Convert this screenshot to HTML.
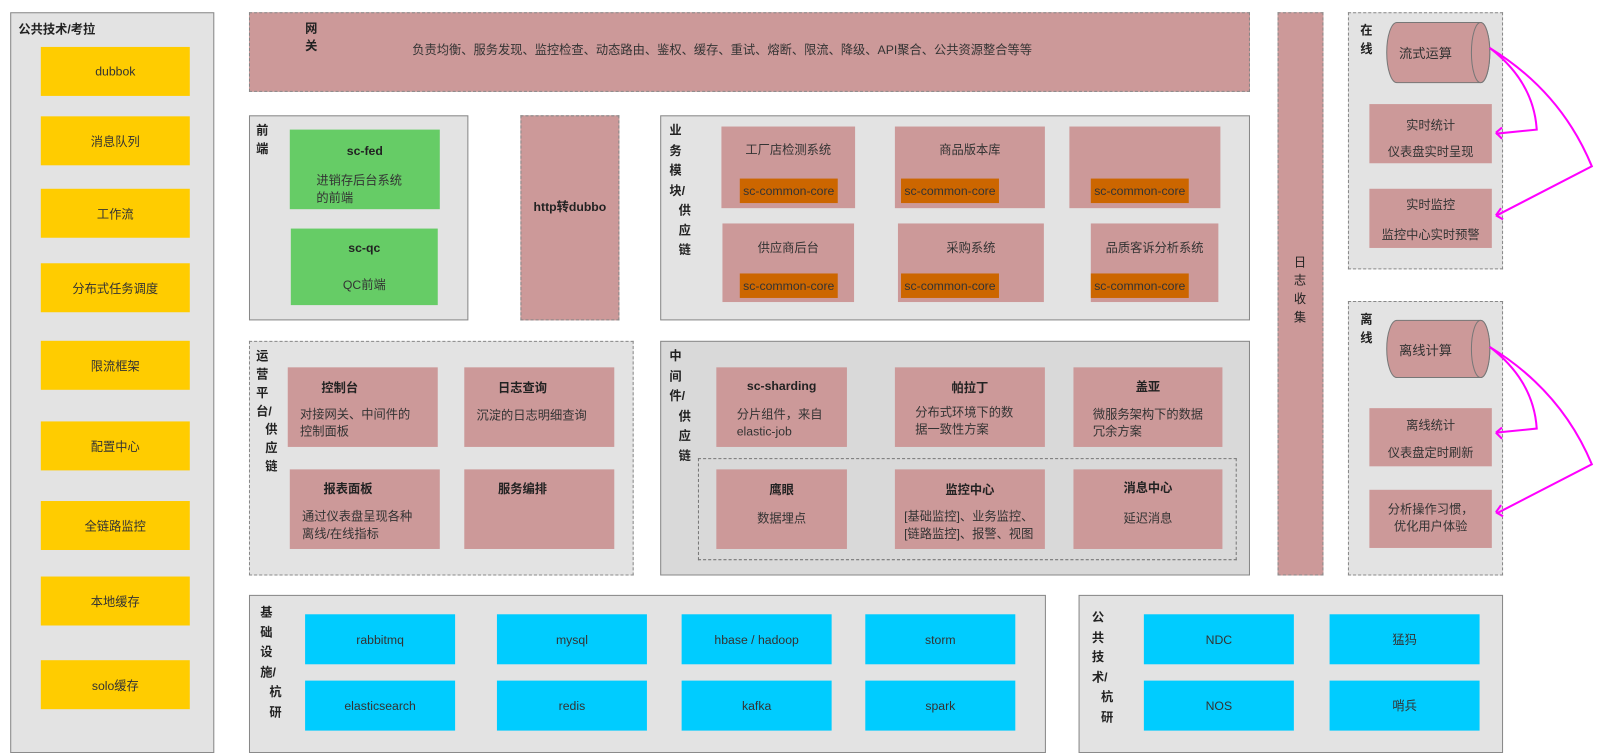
<!DOCTYPE html>
<html><head><meta charset="utf-8"><style>
*{margin:0;padding:0;box-sizing:border-box}
body{width:1600px;height:753px;background:#fff;position:relative;overflow:hidden;font-family:"Liberation Sans","Noto Sans CJK SC",sans-serif;font-size:12px;color:#333}
#w{position:absolute;left:0;top:0;width:1568px;height:738px;transform:scale(1.0204);transform-origin:0 0}
#w div{position:absolute}
.p{background:#e3e3e3;border:1px solid #888}
.d{border-style:dashed}
.k{background:#cc9999}
.y{background:#ffcc00;display:flex;align-items:center;justify-content:center}
.g{background:#66cc66}
.c{background:#00ccff;display:flex;align-items:center;justify-content:center}
.o{background:#cc6600;display:flex;align-items:center;justify-content:center;color:#333}
.v{line-height:19.5px;font-size:12px;font-weight:bold;color:#222;white-space:nowrap}
.v i{font-style:normal;padding-left:9px}
.t{left:0;right:0;text-align:center}
b{font-weight:bold;color:#222}
</style></head><body><div id="w">

<div class="p" style="left:10px;top:12px;width:200px;height:726px"></div>
<div style="left:18px;top:20px;font-weight:bold;color:#222">公共技术/考拉</div>
<div class="y" style="left:40px;top:46px;width:146px;height:48px">dubbok</div>
<div class="y" style="left:40px;top:114px;width:146px;height:48px">消息队列</div>
<div class="y" style="left:40px;top:185px;width:146px;height:48px">工作流</div>
<div class="y" style="left:40px;top:258px;width:146px;height:48px">分布式任务调度</div>
<div class="y" style="left:40px;top:334px;width:146px;height:48px">限流框架</div>
<div class="y" style="left:40px;top:413px;width:146px;height:48px">配置中心</div>
<div class="y" style="left:40px;top:491px;width:146px;height:48px">全链路监控</div>
<div class="y" style="left:40px;top:565px;width:146px;height:48px">本地缓存</div>
<div class="y" style="left:40px;top:647px;width:146px;height:48px">solo缓存</div>

<div class="k" style="left:244px;top:12px;width:981px;height:78px;border:1px dashed #888"></div>
<div class="v" style="left:299px;top:20px;line-height:17px">网<br>关</div>
<div style="left:404px;top:40px">负责均衡、服务发现、监控检查、动态路由、鉴权、缓存、重试、熔断、限流、降级、API聚合、公共资源整合等等</div>

<div class="k" style="left:1252px;top:12px;width:45px;height:552px;border:1px dashed #888"></div>
<div class="v" style="left:1268px;top:248px;font-weight:normal;line-height:18px">日<br>志<br>收<br>集</div>

<div class="p d" style="left:1321px;top:12px;width:152px;height:252px"></div>
<div class="v" style="left:1333px;top:21px;line-height:18px">在<br>线</div>
<div class="p d" style="left:1321px;top:295px;width:152px;height:269px"></div>
<div class="v" style="left:1333px;top:304px;line-height:18px">离<br>线</div>

<div class="k" style="left:1342px;top:102px;width:120px;height:58px"><div class="t" style="top:12px">实时统计</div><div class="t" style="top:38px">仪表盘实时呈现</div></div>
<div class="k" style="left:1342px;top:185px;width:120px;height:58px"><div class="t" style="top:7px">实时监控</div><div class="t" style="top:36px">监控中心实时预警</div></div>
<div class="k" style="left:1342px;top:400px;width:120px;height:57px"><div class="t" style="top:8px">离线统计</div><div class="t" style="top:35px">仪表盘定时刷新</div></div>
<div class="k" style="left:1342px;top:480px;width:120px;height:57px"><div class="t" style="top:11px;line-height:17px">分析操作习惯，<br>优化用户体验</div></div>

<svg style="position:absolute;left:0;top:0" width="1568" height="738">
<g fill="#cc9999" stroke="#777" stroke-width="1">
<path d="M1369 22 H1451 A9 29.5 0 0 1 1451 81 H1369 A10 29.5 0 0 1 1369 22Z"/>
<ellipse cx="1451" cy="51.5" rx="9" ry="29.5"/>
<path d="M1369 314 H1451 A9 28 0 0 1 1451 370 H1369 A10 28 0 0 1 1369 314Z"/>
<ellipse cx="1451" cy="342" rx="9" ry="28"/>
</g>
<g fill="none" stroke="#ff00ff" stroke-width="2">
<path d="M1460 47 Q1503 80 1506 127 L1466 131"/><path d="M1466 130 l6 -5 M1466 130 l6 6"/>
<path d="M1460 47 Q1530 90 1560 163 L1467 211"/><path d="M1466 211 l5 -7 M1466 211 l7 4"/>
<path d="M1460 340 Q1503 373 1506 420 L1466 424"/><path d="M1466 424 l6 -5 M1466 424 l6 6"/>
<path d="M1460 340 Q1530 383 1560 455 L1467 503"/><path d="M1466 502 l5 -7 M1466 502 l7 4"/>
</g>
</svg>
<div style="left:1371px;top:42px;font-size:13px">流式运算</div>
<div style="left:1371px;top:333px;font-size:13px">离线计算</div>

<div class="p" style="left:244px;top:113px;width:215px;height:201px"></div>
<div class="v" style="left:251px;top:119px;line-height:18px">前<br>端</div>
<div class="g" style="left:284px;top:127px;width:147px;height:78px"><div class="t" style="top:14px"><b>sc-fed</b></div><div style="left:26px;top:42px;line-height:17px">进销存后台系统<br>的前端</div></div>
<div class="g" style="left:285px;top:224px;width:144px;height:75px"><div class="t" style="top:12px"><b>sc-qc</b></div><div class="t" style="top:46px">QC前端</div></div>

<div class="k" style="left:510px;top:113px;width:97px;height:201px;border:1px dashed #888"><div class="t" style="top:80px"><b>http转dubbo</b></div></div>

<div class="p" style="left:647px;top:113px;width:578px;height:201px"></div>
<div class="v" style="left:656px;top:119px">业<br>务<br>模<br>块/<br><i>供</i><br><i>应</i><br><i>链</i></div>
<div class="k" style="left:707px;top:124px;width:131px;height:80px"><div class="t" style="top:14px">工厂店检测系统</div></div>
<div class="k" style="left:877px;top:124px;width:147px;height:80px"><div class="t" style="top:14px">商品版本库</div></div>
<div class="k" style="left:1048px;top:124px;width:148px;height:80px"></div>
<div class="k" style="left:708px;top:219px;width:129px;height:77px"><div class="t" style="top:15px">供应商后台</div></div>
<div class="k" style="left:880px;top:219px;width:143px;height:77px"><div class="t" style="top:15px">采购系统</div></div>
<div class="k" style="left:1069px;top:219px;width:125px;height:77px"><div class="t" style="top:15px">品质客诉分析系统</div></div>
<div class="o" style="left:725px;top:175px;width:96px;height:24px">sc-common-core</div>
<div class="o" style="left:883px;top:175px;width:96px;height:24px">sc-common-core</div>
<div class="o" style="left:1069px;top:175px;width:96px;height:24px">sc-common-core</div>
<div class="o" style="left:725px;top:268px;width:96px;height:24px">sc-common-core</div>
<div class="o" style="left:883px;top:268px;width:96px;height:24px">sc-common-core</div>
<div class="o" style="left:1069px;top:268px;width:96px;height:24px">sc-common-core</div>

<div class="p d" style="left:244px;top:334px;width:377px;height:230px"></div>
<div class="v" style="left:251px;top:340px;line-height:18px">运<br>营<br>平<br>台/<br><i>供</i><br><i>应</i><br><i>链</i></div>
<div class="k" style="left:282px;top:360px;width:147px;height:78px"><div style="left:33px;top:11px"><b>控制台</b></div><div style="left:12px;top:38px;line-height:17px">对接网关、中间件的<br>控制面板</div></div>
<div class="k" style="left:455px;top:360px;width:147px;height:78px"><div style="left:33px;top:11px"><b>日志查询</b></div><div style="left:12px;top:38px">沉淀的日志明细查询</div></div>
<div class="k" style="left:284px;top:460px;width:147px;height:78px"><div style="left:33px;top:10px"><b>报表面板</b></div><div style="left:12px;top:38px;line-height:17px">通过仪表盘呈现各种<br>离线/在线指标</div></div>
<div class="k" style="left:455px;top:460px;width:147px;height:78px"><div style="left:33px;top:10px"><b>服务编排</b></div></div>

<div class="p" style="left:647px;top:334px;width:578px;height:230px;background:#d9d9d9"></div>
<div class="v" style="left:656px;top:340px">中<br>间<br>件/<br><i>供</i><br><i>应</i><br><i>链</i></div>
<div class="k" style="left:702px;top:360px;width:128px;height:78px"><div class="t" style="top:11px"><b>sc-sharding</b></div><div style="left:20px;top:38px;line-height:17px">分片组件，来自<br>elastic-job</div></div>
<div class="k" style="left:877px;top:360px;width:147px;height:78px"><div class="t" style="top:11px"><b>帕拉丁</b></div><div style="left:20px;top:36px;line-height:17px">分布式环境下的数<br>据一致性方案</div></div>
<div class="k" style="left:1052px;top:360px;width:146px;height:78px"><div class="t" style="top:10px"><b>盖亚</b></div><div style="left:19px;top:38px;line-height:17px">微服务架构下的数据<br>冗余方案</div></div>
<div style="left:684px;top:449px;width:528px;height:100px;border:1px dashed #777"></div>
<div class="k" style="left:702px;top:460px;width:128px;height:78px"><div class="t" style="top:11px"><b>鹰眼</b></div><div class="t" style="top:39px">数据埋点</div></div>
<div class="k" style="left:877px;top:460px;width:147px;height:78px"><div class="t" style="top:11px"><b>监控中心</b></div><div style="left:9px;top:38px;line-height:17px">[基础监控]、业务监控、<br>[链路监控]、报警、视图</div></div>
<div class="k" style="left:1052px;top:460px;width:146px;height:78px"><div class="t" style="top:9px"><b>消息中心</b></div><div class="t" style="top:39px">延迟消息</div></div>

<div class="p" style="left:244px;top:583px;width:781px;height:155px"></div>
<div class="v" style="left:255px;top:591px">基<br>础<br>设<br>施/<br><i>杭</i><br><i>研</i></div>
<div class="c" style="left:299px;top:602px;width:147px;height:49px">rabbitmq</div>
<div class="c" style="left:487px;top:602px;width:147px;height:49px">mysql</div>
<div class="c" style="left:668px;top:602px;width:147px;height:49px">hbase / hadoop</div>
<div class="c" style="left:848px;top:602px;width:147px;height:49px">storm</div>
<div class="c" style="left:299px;top:667px;width:147px;height:49px">elasticsearch</div>
<div class="c" style="left:487px;top:667px;width:147px;height:49px">redis</div>
<div class="c" style="left:668px;top:667px;width:147px;height:49px">kafka</div>
<div class="c" style="left:848px;top:667px;width:147px;height:49px">spark</div>

<div class="p" style="left:1057px;top:583px;width:416px;height:155px"></div>
<div class="v" style="left:1070px;top:596px">公<br>共<br>技<br>术/<br><i>杭</i><br><i>研</i></div>
<div class="c" style="left:1121px;top:602px;width:147px;height:49px">NDC</div>
<div class="c" style="left:1303px;top:602px;width:147px;height:49px">猛犸</div>
<div class="c" style="left:1121px;top:667px;width:147px;height:49px">NOS</div>
<div class="c" style="left:1303px;top:667px;width:147px;height:49px">哨兵</div>
</div></body></html>
